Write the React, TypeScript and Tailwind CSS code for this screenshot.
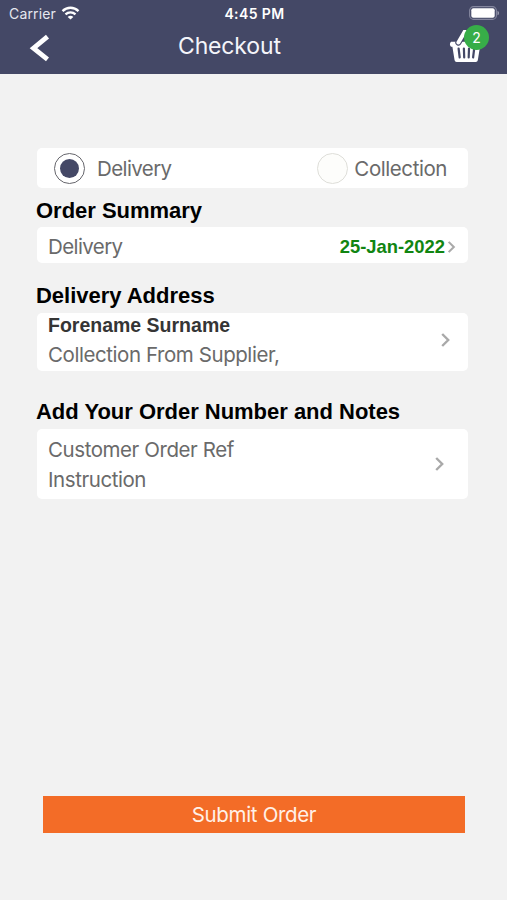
import type { ReactNode } from "react"

interface RadioProps {
  label: string
  checked: boolean
}

// iOS status bar: carrier, clock and battery

function StatusBar() {
  return (
    <div className="flex h-[27px] items-center justify-between pr-[7px] pb-px pl-[9px] text-white">
      <div className="flex w-[120px] items-center gap-[5px]">
        <span className="text-[14px] tracking-[0.15px] text-[#e6e7ef]">Carrier</span>
        <svg className="h-[14px] w-[19px]" viewBox="0 0 18 14" fill="none" stroke="currentColor" strokeWidth="2.3">
          <path d="M1 5.1C5.6.6 12.4.6 17 5.1" />
          <path d="M4 8.4c2.9-2.8 7.1-2.8 10 0" />
          <path d="M9 13.6 6.2 10.9c1.6-1.5 4-1.5 5.6 0z" fill="currentColor" stroke="none" />
        </svg>
      </div>
      <span className="text-[14px] font-semibold tracking-[0.4px]">4:45 PM</span>
      <div className="flex w-[120px] justify-end">
        <svg className="h-[14px] w-[31px]" viewBox="0 0 31 14" fill="none">
          <rect x="0.6" y="0.6" width="26.8" height="12.8" rx="4" stroke="#85879f" strokeWidth="1.1" />
          <rect x="2.3" y="2.3" width="23.4" height="9.4" rx="2" fill="#fff" />
          <path d="M28.5 4.7c2 .8 2 3.8 0 4.6z" fill="#9a9caf" />
        </svg>
      </div>
    </div>
  )
}

function BasketIcon() {
  return (
    <svg className="h-[33px] w-[34px]" viewBox="0 0 34 33">
      <path d="M2 11.8h30q1.7 2.4 0 5h-1l-2.2 13.5q-.3 1.8-2 1.8H7.6q-1.7 0-2-1.8L3.4 16.8H2q-2.2-2.4 0-5z" fill="#fff" />
      <path d="M15.8 1.5 9.4 12.5" stroke="#444866" strokeWidth="6.2" strokeLinecap="round" />
      <path d="M15.8 1.5 9.4 12.5" stroke="#fff" strokeWidth="4" strokeLinecap="round" />
      <path d="m9.6 18.5 1.1 9M14.9 18.5l.3 9M20 18.5l-.3 9M25.2 18.5l-1.1 9" stroke="#444866" strokeWidth="2.2" strokeLinecap="round" />
    </svg>
  )
}

function Header() {
  return (
    <header className="h-[74px] bg-[#444866]">
      <StatusBar />
      <div className="flex h-[47px] items-start pr-[24px] pl-[29px]">
        <button className="mt-[7px] w-[149px]" aria-label="Back">
          <svg className="h-[28px] w-[21px]" viewBox="0 0 21 28" fill="none" stroke="#fff" strokeWidth="4.8">
            <path d="M18.5 2.7 4.5 14.2l14 11.2" />
          </svg>
        </button>
        <h1 className="mt-[3px] flex-1 text-[23px] leading-[32px] tracking-[-0.15px] text-[#f4f5fa]">Checkout</h1>
        <div className="relative w-[34px] pt-[3px]">
          <BasketIcon />
          <span className="absolute -top-[2px] left-[15px] flex h-[25px] w-[25px] items-center justify-center rounded-full bg-[#37ad48] text-[14px] text-white">
            2
          </span>
        </div>
      </div>
    </header>
  )
}

function Radio({ label, checked }: RadioProps) {
  return (
    <label className="flex items-center">
      <span
        className={`flex h-[31px] w-[31px] items-center justify-center rounded-full border ${
          checked ? "border-[#66666c] bg-white" : "border-[#deded9] bg-[#fdfdfb]"
        }`}
      >
        {checked && <span className="h-[19px] w-[19px] rounded-full bg-[#444866]" />}
      </span>
      <span className={checked ? "mt-[2px] ml-[12px] tracking-[-0.6px]" : "mt-[2px] ml-[6px]"}>{label}</span>
    </label>
  )
}

function Chevron({ className }: { className: string }) {
  return (
    <svg className={className} viewBox="0 0 9 14" fill="none" stroke="#a9a9a9" strokeWidth="2.4">
      <path d="m1.2 1 6 6-6 6" />
    </svg>
  )
}

function SectionTitle({ children }: { children: ReactNode }) {
  return (
    <h2 className="-ml-px font-['Liberation_Sans',Arial,sans-serif] text-[22px] leading-[26px] font-bold tracking-[-0.02px] whitespace-nowrap text-black">
      {children}
    </h2>
  )
}

export default function App() {
  return (
    <div className="flex h-[900px] w-[507px] flex-col bg-[#f2f2f2] font-[Inter,sans-serif] text-[#6a6a6a]">
      <Header />

      <main className="flex flex-1 flex-col pr-[39px] pl-[37px] text-[20.5px] leading-[30px] tracking-[-0.43px]">
        <div className="mt-[74px] flex h-[40px] items-center justify-between rounded-[5px] bg-white pr-[21px] pl-[17px]">
          <Radio label="Delivery" checked />
          <Radio label="Collection" checked={false} />
        </div>

        <div className="mt-[10px]">
          <SectionTitle>Order Summary</SectionTitle>
        </div>
        <div className="mt-[3px] flex h-[36px] items-center rounded-[5px] bg-white pt-[4px] pr-[12px] pl-[11px]">
          <span className="flex-1 tracking-[-0.6px]">Delivery</span>
          <span className="font-['Liberation_Sans',Arial,sans-serif] text-[18.4px] font-bold tracking-normal text-[#118511]">25-Jan-2022</span>
          <Chevron className="ml-[2px] h-[12px] w-[9px]" />
        </div>

        <div className="mt-[20px]">
          <SectionTitle>Delivery Address</SectionTitle>
        </div>
        <div className="mt-[4px] flex h-[58px] items-center rounded-[5px] bg-white pr-[18px] pb-[4px] pl-[11px]">
          <div className="flex-1">
            <p className="font-['Liberation_Sans',Arial,sans-serif] text-[19.5px] leading-[29px] font-bold tracking-normal text-[#353535]">
              Forename Surname
            </p>
            <p className="leading-[29px]">Collection From Supplier,</p>
          </div>
          <Chevron className="h-[14px] w-[9px]" />
        </div>

        <div className="mt-[28px]">
          <SectionTitle>Add Your Order Number and Notes</SectionTitle>
        </div>
        <div className="mt-[4px] flex h-[70px] items-center rounded-[5px] bg-white pr-[24px] pl-[11px]">
          <div className="flex-1 pt-[2px]">
            <p>Customer Order Ref</p>
            <p>Instruction</p>
          </div>
          <Chevron className="h-[14px] w-[9px]" />
        </div>

        <button className="mt-auto mb-[67px] ml-[6px] h-[37px] w-[422px] bg-[#f36c27] tracking-[-0.33px] text-[#fff1e8]">
          Submit Order
        </button>
      </main>
    </div>
  )
}
